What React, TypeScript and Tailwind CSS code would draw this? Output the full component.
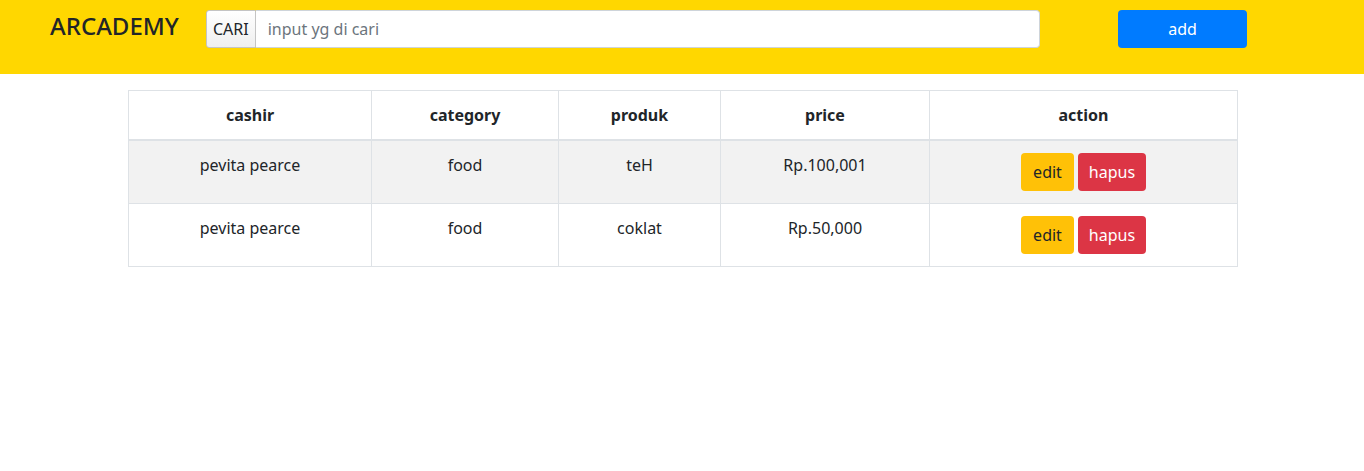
const rows = [
  { cashir: "pevita pearce", category: "food", produk: "teH", price: "Rp.100,001" },
  { cashir: "pevita pearce", category: "food", produk: "coklat", price: "Rp.50,000" },
];

export default function App() {
  return (
    <div className="min-h-[471px] bg-white text-[#212529] font-['Segoe_UI','Noto_Sans',sans-serif] text-base">
      <header className="h-[74px] bg-[#ffd700] flex items-start pt-[10px]">
        <h3 className="ml-[50px] w-[156px] text-[24px] leading-[29px] font-medium mt-[1px]">ARCADEMY</h3>
        <div className="flex w-[834px] h-[38px]">
          <span className="flex items-center px-[6px] border border-[#c4c4c4] rounded-l-[3px] bg-gradient-to-b from-white to-[#efefef] text-[#212529] leading-6">
            CARI
          </span>
          <input
            type="text"
            placeholder="input yg di cari"
            className="flex-1 border border-l-0 border-[#ced4da] rounded-r-[4px] bg-white px-3 leading-6 text-[#495057] placeholder:text-[#6c757d] outline-none"
          />
        </div>
        <button className="ml-[78px] w-[129px] h-[38px] rounded-[4px] bg-[#007bff] text-white leading-6">add</button>
      </header>

      <div className="px-[128px] pt-4">
        <table className="w-[1109px] border-collapse border border-[#dee2e6] text-center table-fixed">
          <colgroup>
            <col className="w-[243px]" />
            <col className="w-[187px]" />
            <col className="w-[162px]" />
            <col className="w-[209px]" />
            <col className="w-[308px]" />
          </colgroup>
          <thead>
            <tr>
              {["cashir", "category", "produk", "price", "action"].map((h) => (
                <th key={h} className="border border-[#dee2e6] border-b-2 p-3 font-bold leading-6 align-bottom">
                  {h}
                </th>
              ))}
            </tr>
          </thead>
          <tbody>
            {rows.map((r, i) => (
              <tr key={i} className={i === 0 ? "bg-[#f2f2f2]" : "bg-white"}>
                <td className="border border-[#dee2e6] p-3 leading-6 align-top">{r.cashir}</td>
                <td className="border border-[#dee2e6] p-3 leading-6 align-top">{r.category}</td>
                <td className="border border-[#dee2e6] p-3 leading-6 align-top">{r.produk}</td>
                <td className="border border-[#dee2e6] p-3 leading-6 align-top">{r.price}</td>
                <td className="border border-[#dee2e6] p-3 leading-6 align-top">
                  <div className="flex justify-center gap-1">
                    <button className="h-[38px] w-[53px] rounded-[4px] bg-[#ffc107] text-[#212529]">edit</button>
                    <button className="h-[38px] w-[68px] rounded-[4px] bg-[#dc3545] text-white">hapus</button>
                  </div>
                </td>
              </tr>
            ))}
          </tbody>
        </table>
      </div>
    </div>
  );
}
